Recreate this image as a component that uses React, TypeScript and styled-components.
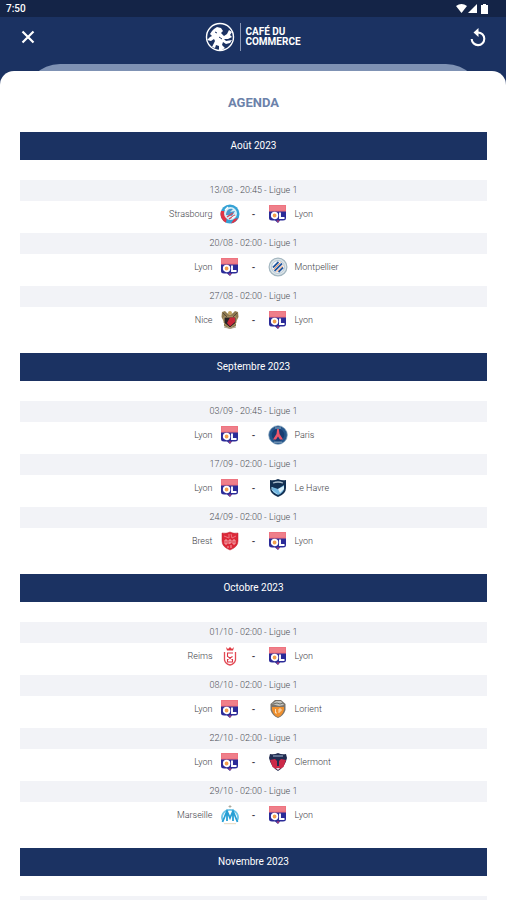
import React from 'react';
import styled, { createGlobalStyle } from 'styled-components';

const GlobalStyle = createGlobalStyle`
  * { box-sizing: border-box; }
  body { margin: 0; background: #1b3262; font-family: Roboto, "Liberation Sans", sans-serif; }
`;

const Screen = styled.div`
  display: flex;
  flex-direction: column;
  height: 100vh;
  background: #1b3262;
`;

const StatusBar = styled.div`
  display: flex;
  flex: none;
  align-items: center;
  justify-content: space-between;
  height: 17px;
  padding: 1px 18px 0 6px;
  background: #142447;
  color: #fff;
  font-size: 10px;
  font-weight: 500;
  line-height: 16px;
`;

const StatusIcons = styled.svg`
  display: block;
  width: 32px;
  height: 10px;
`;

const Header = styled.header`
  display: grid;
  flex: none;
  grid-template-columns: 1fr auto 1fr;
  align-items: center;
  height: 47px;
  padding: 0 18px;
  padding-bottom: 7px;
`;

const IconButton = styled.button<{ $end?: boolean }>`
  display: grid;
  place-items: center;
  justify-self: ${(p) => (p.$end ? 'end' : 'start')};
  width: 20px;
  height: 24px;
  padding: 0;
  border: 0;
  background: none;
  color: #fff;
  cursor: pointer;

  svg { display: block; }
`;

const Brand = styled.div`
  display: flex;
  align-items: center;
  gap: 5px;
`;

const BrandText = styled.div`
  padding: 4px 0 4px 4px;
  border-left: 1px solid #8795b3;
  color: #fff;
  font-size: 10px;
  font-weight: 700;
  line-height: 10px;
`;

const BackCard = styled.div`
  flex: none;
  height: 36px;
  margin: 0 24px -29px;
  border-radius: 36px 36px 0 0;
  background: #7f92b4;
`;

const Sheet = styled.main`
  position: relative;
  flex: 1;
  min-height: 0;
  padding: 22px 19px 0 20px;
  overflow-y: auto;
  scrollbar-width: none;
  border-radius: 14px 14px 0 0;
  background: #fff;
`;

const Title = styled.h1`
  margin: 0 0 19px;
  color: #6c82aa;
  font-size: 13px;
  font-weight: 700;
  line-height: 20px;
  text-align: center;
`;

const Month = styled.section`
  margin-bottom: 14px;
`;

const MonthTitle = styled.h2`
  margin: 0 0 20px;
  background: #1b3262;
  color: #fff;
  font-size: 10px;
  font-weight: 400;
  line-height: 28px;
  text-align: center;
`;

const Match = styled.article`
  height: 53px;
`;

const MatchMeta = styled.div`
  height: 21px;
  background: #f2f3f7;
  color: #4c4e56;
  font-size: 9px;
  font-weight: 300;
  line-height: 21px;
  text-align: center;
`;

const Teams = styled.div`
  display: grid;
  grid-template-columns: 1fr 20px 14px 20px 1fr;
  column-gap: 7px;
  align-items: center;
  height: 25px;
  color: #3c3e46;
  font-size: 9px;
  font-weight: 300;
  line-height: 20px;
  text-align: center;
`;

const Versus = styled.span`
  font-weight: 700;
`;

const TeamName = styled.span<{ $home?: boolean }>`
  text-align: ${(p) => (p.$home ? 'right' : 'left')};
`;

const Crest = styled.svg`
  display: block;
  width: 20px;
  height: 20px;
`;

const shield = 'M2 2Q6 3 10 1Q14 3 18 2V10Q18 16 10 19Q2 16 2 10Z';

const crests: Record<string, React.ReactNode> = {
  Lyon: (
    <>
      <path d="M1 1H18V14Q18 16.500 15 16.500H12L10 19 7 16.500H4Q1 16.500 1 14Z" fill="#2b2b98" />
      <path d="M1 1H18V7.500H1Z" fill="#ee7480" />
      <path d="M2 3H17M2 5H17" stroke="#f29aa1" strokeWidth=".6" />
      <circle cx="6.600" cy="11.500" r="2.800" fill="#f4a04c" stroke="#fff" strokeWidth="1.800" />
      <path d="M12 8.500V14H16.500" fill="none" stroke="#fff" strokeWidth="1.900" />
      <path d="M8.500 16.500H11.500L10 18.500Z" fill="#c3406f" />
    </>
  ),
  Strasbourg: (
    <>
      <circle cx="10" cy="10" r="9.500" fill="#35a2d5" />
      <path d="M1 7A9.500 9.500 0 0 0 6 18.700L7 13 4 7ZM14 15L18 14A9.500 9.500 0 0 1 11 19.500Z" fill="#df3446" />
      <circle cx="10.500" cy="9.500" r="6.500" fill="#d9eef6" />
      <path d="M6 10Q7 4 13 5L10 8 15 7 12 12 6 11Z" fill="#4899cd" />
      <path d="M7 13L13 9M9 15L15 11" stroke="#d84658" strokeWidth="1.300" />
      <path d="M5 6L8 3M12 14L15 12" stroke="#fff" strokeWidth="1.200" />
    </>
  ),
  Montpellier: (
    <>
      <circle cx="10" cy="10" r="8.900" fill="#dbe4e8" stroke="#a3b6c0" strokeWidth="1.200" />
      <circle cx="10" cy="10" r="6.300" fill="#fff" stroke="#8ba4b8" strokeWidth=".6" />
      <path d="M5 10.500L10.500 5M6.500 14L14 6.500M10.500 15L15 10.500" stroke="#24589e" strokeWidth="1.800" />
      <path d="M5.500 12.500L12.500 5.500M8.500 15L15 8.500" stroke="#ee8b55" strokeWidth=".9" />
    </>
  ),
  Nice: (
    <>
      <path d="M10 5L13 3 15 1 18 2 18.500 7 16 12 16 16 10 19 4 16 4 12 1.500 7 2 2 5 1 7 3Z" fill="#8e7950" />
      <path d="M4 7H16V13L10 18 4 13Z" fill="#252326" stroke="#bba16c" />
      <path d="M10 7.500H15V12L10 16.500 7 13Z" fill="#c92739" />
      <circle cx="10" cy="3" r="2" fill="#c0a15c" />
      <path d="M3 3L7 7M17 3L13 7" stroke="#463e35" strokeWidth=".8" />
      <path d="M4 17Q10 20 16 17" fill="none" stroke="#aaa08c" />
    </>
  ),
  Paris: (
    <>
      <circle cx="10" cy="10" r="9.300" fill="#25568b" stroke="#81a1bb" strokeWidth=".7" />
      <circle cx="10" cy="10" r="6.300" fill="#183d72" />
      <path d="M9.200 4H10.800L11.500 9 15 14.500H12L10 11.500 8 14.500H5L8.500 9Z" fill="#f0566a" />
      <path d="M6 17.200H14M7 3H13" stroke="#a9bed0" strokeWidth=".8" />
    </>
  ),
  'Le Havre': (
    <>
      <path d={shield} fill="#133052" />
      <path d="M4 9L10 11 16 7V11Q15 15 10 17L5 14Z" fill="#71b5df" />
      <path d="M10 11L16 8V11L12 15Z" fill="#d7eff9" />
      <path d="M5 5Q10 3 15 5" fill="none" stroke="#a9bccb" strokeWidth="1.300" />
      <path d="M4 9V12L9 16" stroke="#a9d7ef" fill="none" />
    </>
  ),
  Brest: (
    <>
      <path d={shield} fill="#dc2838" stroke="#bd1c2d" strokeWidth=".5" />
      <path d="M4 5L9 7 9 3M16 5L12 7 11 3" stroke="#ef7681" fill="none" />
      <path d="M5 9V13H7V9H5M9 13V9H11V12H9M13 9V13H15V9H13" stroke="#f9c4c8" strokeWidth=".8" fill="none" />
      <path d="M8 15V17M11 14V17" stroke="#f4a4ab" fill="none" />
    </>
  ),
  Reims: (
    <>
      <path d="M6 1L8 3 10 1 12 3 14 1 13 4.500H7Z" fill="#e0363f" />
      <path d="M4.500 6V14Q5.500 18 10 19Q14.500 18 15.500 14V6" fill="none" stroke="#e34b55" strokeWidth="1.300" />
      <path d="M13 7H7.500V10.500L12.500 13.500V16H7.500V13.500L12.500 10.500" fill="none" stroke="#dc3344" strokeWidth="1.100" />
    </>
  ),
  Lorient: (
    <>
      <path d="M2.500 5L7 1H13L17.500 5V11Q15.500 17 10 19Q4.500 17 2.500 11Z" fill="#79736b" />
      <path d="M4 8H16V11Q14 17 10 18Q6 17 4 11Z" fill="#f0902e" />
      <path d="M4 5L8 2H13L16 6 11 7Z" fill="#c2c2bc" />
      <path d="M5 5L9 4 12 5 15 4" stroke="#6d6f69" fill="none" />
      <path d="M7.500 10V14H9M11 14V10H13V12H11" stroke="#fae7c9" fill="none" strokeWidth=".9" />
    </>
  ),
  Clermont: (
    <>
      <path d="M2 2Q6 3 10 1Q14 3 18 2L19 6Q17 15 10 19Q3 15 1 6Z" fill="#202b50" />
      <path d="M2 8L7 7 10 10 13 7 18 8 15.500 15 10 18 4.500 15Z" fill="#cc2948" />
      <path d="M9 9L10 7 11 9V14H9Z" fill="#202b50" />
      <path d="M5 4H15" stroke="#8fa2bf" strokeWidth="1.200" />
      <path d="M8 16H12L10 18Z" fill="#dfe5ee" />
    </>
  ),
  Marseille: (
    <>
      <path d="M10 0V3M8.500 1.500H11.500" stroke="#9a9787" strokeWidth=".7" />
      <path d="M3 16A8 7.500 0 1 1 17 16" fill="none" stroke="#6fc6e8" strokeWidth="1.800" />
      <path d="M2.500 17L7 6 10 13 13 6 17.500 17M7 8V16M13 8V16" fill="none" stroke="#269fd5" strokeWidth="1.800" />
      <path d="M4 18.700H16" stroke="#e6d8bf" />
    </>
  ),
};

interface Fixture { meta: string; home: string; away: string }

const months: { name: string; fixtures: Fixture[] }[] = [
  {
    name: 'Août 2023',
    fixtures: [
      { meta: '13/08 - 20:45 - Ligue 1', home: 'Strasbourg', away: 'Lyon' },
      { meta: '20/08 - 02:00 - Ligue 1', home: 'Lyon', away: 'Montpellier' },
      { meta: '27/08 - 02:00 - Ligue 1', home: 'Nice', away: 'Lyon' },
    ],
  },
  {
    name: 'Septembre 2023',
    fixtures: [
      { meta: '03/09 - 20:45 - Ligue 1', home: 'Lyon', away: 'Paris' },
      { meta: '17/09 - 02:00 - Ligue 1', home: 'Lyon', away: 'Le Havre' },
      { meta: '24/09 - 02:00 - Ligue 1', home: 'Brest', away: 'Lyon' },
    ],
  },
  {
    name: 'Octobre 2023',
    fixtures: [
      { meta: '01/10 - 02:00 - Ligue 1', home: 'Reims', away: 'Lyon' },
      { meta: '08/10 - 02:00 - Ligue 1', home: 'Lyon', away: 'Lorient' },
      { meta: '22/10 - 02:00 - Ligue 1', home: 'Lyon', away: 'Clermont' },
      { meta: '29/10 - 02:00 - Ligue 1', home: 'Marseille', away: 'Lyon' },
    ],
  },
];

function TeamCrest({ team }: { team: string }) {
  return <Crest viewBox="0 0 20 20" aria-hidden="true">{crests[team]}</Crest>;
}

function LionLogo() {
  return (
    <svg width="30" height="30" viewBox="0 0 30 30" aria-hidden="true">
      <circle cx="15" cy="15" r="13.500" fill="none" stroke="#fff" strokeWidth="1.400" />
      <path
        d="M9 7L12 5 16 6 18 9 16 11 19 14 22 12 24 8 27 10 25 13 27 15 23 17 19 17 21 19 27 18 25 21 21 22 18 20 17 23 20 26 17 28 14 28 14 24 11 23 10 26 7 25 10 19 9 17 6 19 2 18 5 15 7 14 5 12 7 9Z"
        fill="#fff"
      />
      <path d="M10 10L12 11M14 15L17 17" stroke="#1b3262" strokeWidth="1" />
    </svg>
  );
}

export default function App() {
  return (
    <>
      <GlobalStyle />
      <Screen>
        <StatusBar>
          <span>7:50</span>
          <StatusIcons viewBox="0 0 32 10" fill="#fff" aria-hidden="true">
            <path d="M0 2Q5.500-2 11 2L5.500 9Z" />
            <path d="M21 0V9H12Z" />
            <path d="M27 0H30V1H32V10H25V1H27Z" />
          </StatusIcons>
        </StatusBar>
        <Header>
          <IconButton type="button" aria-label="Fermer">
            <svg width="14" height="14" viewBox="0 0 14 14" stroke="#fff" strokeWidth="2.200">
              <path d="M1.500 1.500L12.500 12.500M12.500 1.500L1.500 12.500" />
            </svg>
          </IconButton>
          <Brand>
            <LionLogo />
            <BrandText>CAFÉ DU<br />COMMERCE</BrandText>
          </Brand>
          <IconButton type="button" aria-label="Actualiser" $end>
            <svg width="18" height="20" viewBox="0 0 18 20" fill="none">
              <path d="M9 5.500A6.300 6.300 0 1 1 2.700 12" stroke="#fff" strokeWidth="2.100" />
              <path d="M9.500 1V10L4.500 5.500Z" fill="#fff" />
            </svg>
          </IconButton>
        </Header>
        <BackCard />
        <Sheet>
          <Title>AGENDA</Title>
          {months.map((month) => (
            <Month key={month.name}>
              <MonthTitle>{month.name}</MonthTitle>
              {month.fixtures.map((f) => (
                <Match key={f.meta}>
                  <MatchMeta>{f.meta}</MatchMeta>
                  <Teams>
                    <TeamName $home>{f.home}</TeamName>
                    <TeamCrest team={f.home} />
                    <Versus>-</Versus>
                    <TeamCrest team={f.away} />
                    <TeamName>{f.away}</TeamName>
                  </Teams>
                </Match>
              ))}
            </Month>
          ))}
          <Month>
            <MonthTitle>Novembre 2023</MonthTitle>
            <MatchMeta />
          </Month>
        </Sheet>
      </Screen>
    </>
  );
}
